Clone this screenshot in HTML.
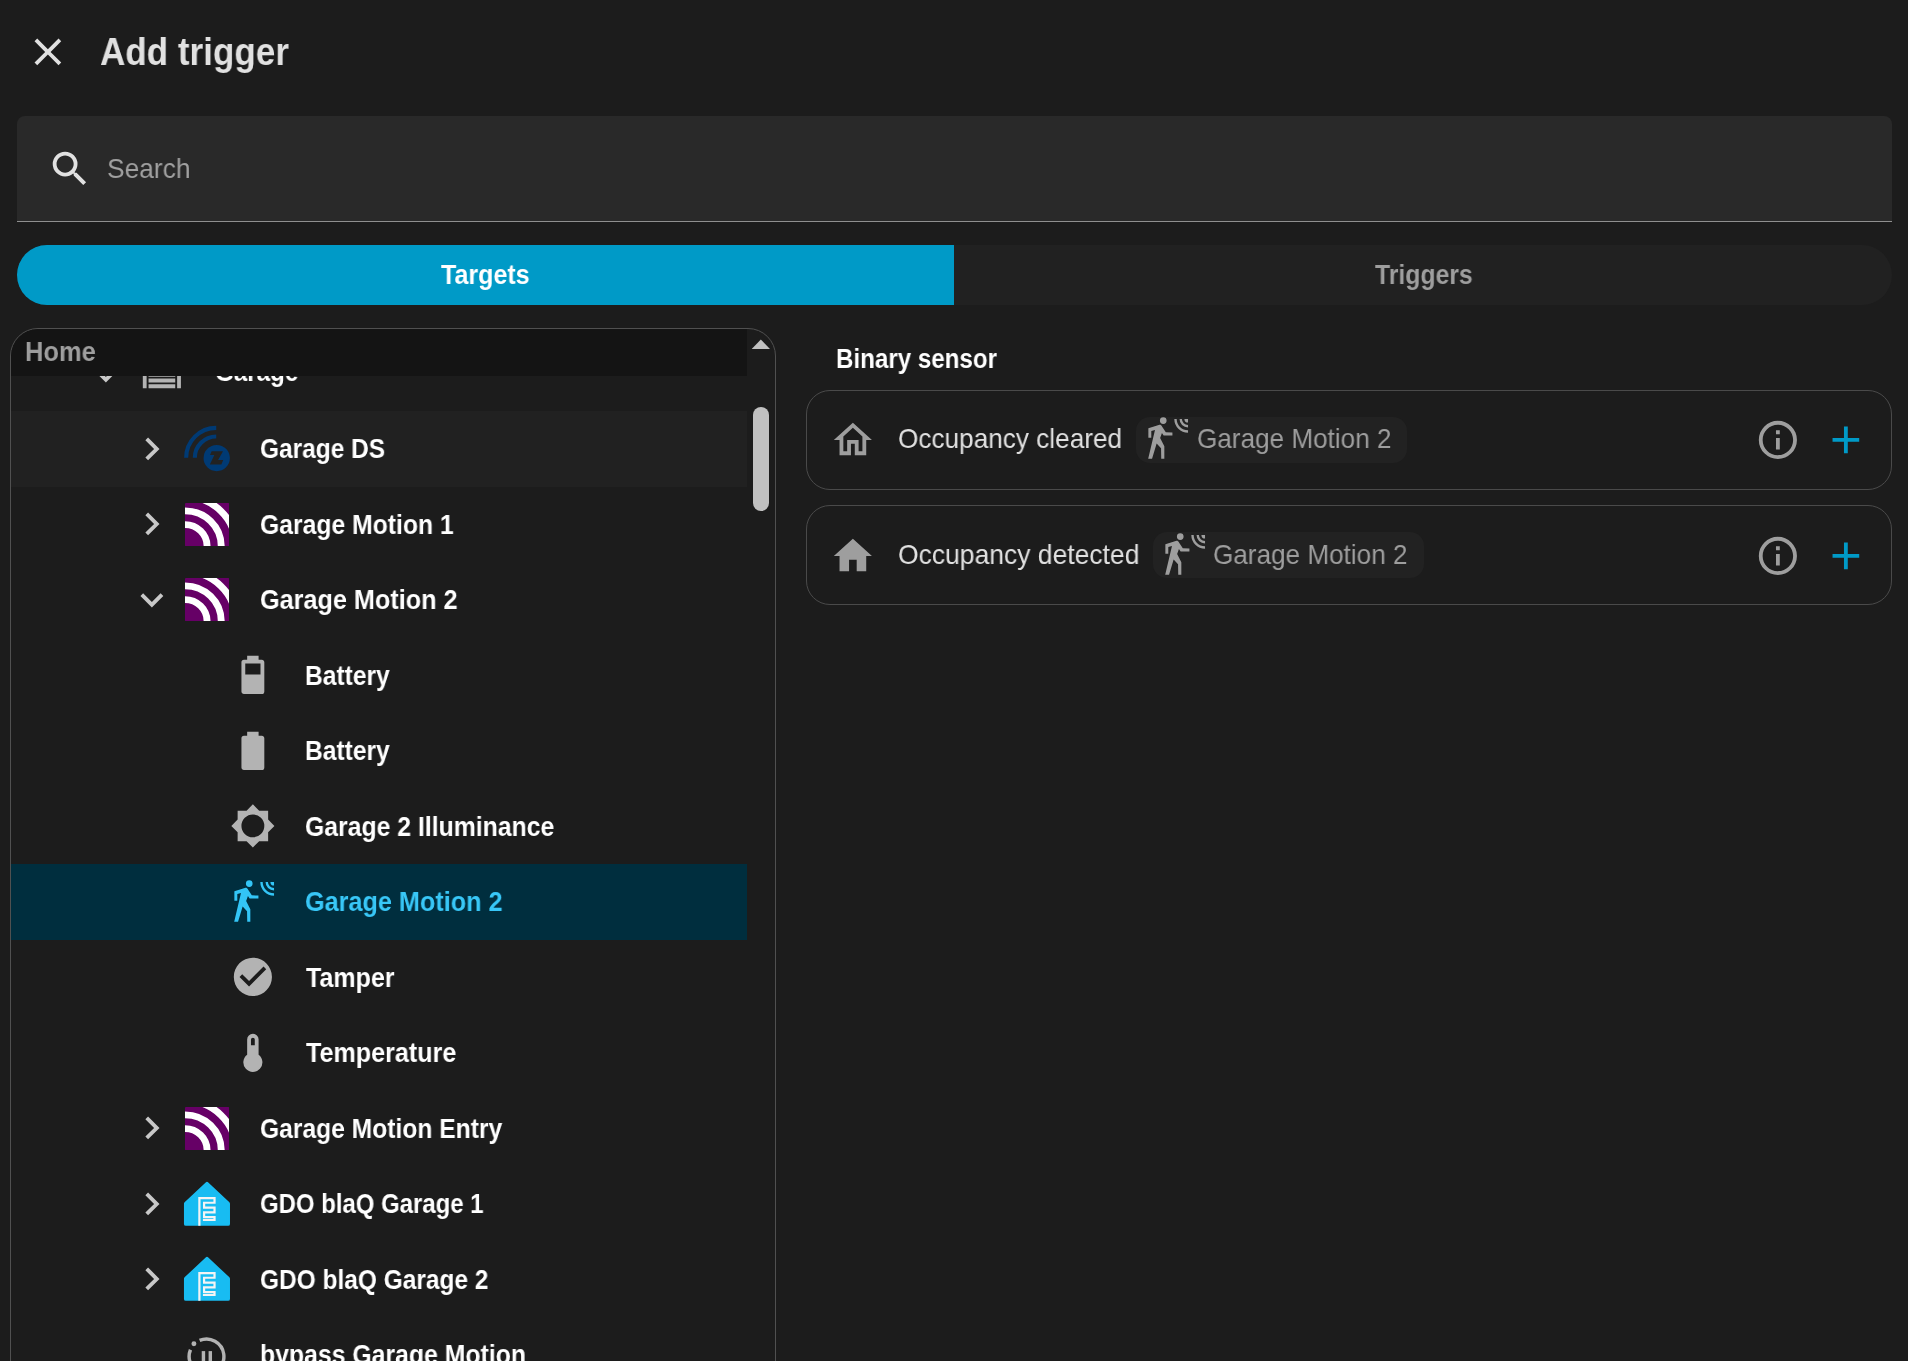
<!DOCTYPE html>
<html><head><meta charset="utf-8"><title>Add trigger</title>
<style>
html,body{margin:0;padding:0;width:1908px;height:1361px;overflow:hidden;background:#1c1c1c;font-family:"Liberation Sans",sans-serif}
.box,.ic,.t{position:absolute}
.t{white-space:nowrap;transform-origin:0 0;will-change:transform}
#tree{position:absolute;left:0;top:0;width:1908px;height:1361px;overflow:hidden;clip-path:inset(329px 1161px 0 11px round 27px 0 0 0)}
</style></head><body>
<svg class="ic" style="left:24.83px;top:28.73px;width:45.75px;height:45.75px" viewBox="0 0 24 24"><path fill="#e1e1e1" fill-rule="nonzero" d="M19,6.41L17.59,5L12,10.59L6.41,5L5,6.41L10.59,12L5,17.59L6.41,19L12,13.41L17.59,19L19,17.59L13.41,12L19,6.41Z"/></svg><div class="box" style="left:17px;top:116px;width:1875px;height:105px;background:#292929;border-radius:8px 8px 0 0"></div><div class="box" style="left:17px;top:221px;width:1875px;height:1.1px;background:#8f8f8f"></div><svg class="ic" style="left:46.72px;top:145.93px;width:45.75px;height:45.75px" viewBox="0 0 24 24"><path fill="#e1e1e1" fill-rule="nonzero" d="M9.5,3A6.5,6.5 0 0,1 16,9.5C16,11.11 15.41,12.59 14.44,13.73L14.71,14H15.5L20.5,19L19,20.5L14,15.5V14.71L13.73,14.44C12.59,15.41 11.11,16 9.5,16A6.5,6.5 0 0,1 3,9.5A6.5,6.5 0 0,1 9.5,3M9.5,5C7,5 5,7 5,9.5C5,12 7,14 9.5,14C12,14 14,12 14,9.5C14,7 12,5 9.5,5Z"/></svg><div class="box" style="left:17px;top:245px;width:1875px;height:60px;background:#212121;border-radius:30px"></div><div class="box" style="left:17px;top:245px;width:937px;height:60px;background:#009ac7;border-radius:30px 0 0 30px"></div><div class="box" style="left:10px;top:328px;width:766px;height:1100px;border:1px solid #505050;border-radius:28px;box-sizing:border-box"></div>
<div id="tree">
<svg class="ic" style="left:82.97px;top:351.77px;width:45.75px;height:45.75px" viewBox="0 0 24 24"><path fill="#c8c8c8" fill-rule="nonzero" d="M7.41,8.58L12,13.17L16.59,8.58L18,10L12,16L6,10L7.41,8.58Z"/></svg><svg class="ic" style="left:138.93px;top:350.38px;width:45.75px;height:45.75px" viewBox="0 0 24 24"><path fill="#b3b3b3" fill-rule="evenodd" d="M22,9V20H20V11H4V20H2V9L12,5L22,9M19,12H5V14H19V12M19,18H5V20H19V18M19,15H5V17H19V15Z"/></svg><div class="box" style="left:11px;top:411.0px;width:736px;height:75.5px;background:#212121"></div><svg class="ic" style="left:128.62px;top:425.88px;width:45.75px;height:45.75px" viewBox="0 0 24 24"><path fill="#c8c8c8" fill-rule="nonzero" d="M8.59,16.58L13.17,12L8.59,7.41L10,6L16,12L10,18L8.59,16.58Z"/></svg><svg class="ic" style="left:180px;top:420.25px;width:56px;height:56px" viewBox="0 0 1361 1361"><g fill="none" stroke="#003a74" stroke-width="100"><path d="M150,920A730,730 0 0,1 880,190"/><path d="M360,920A520,520 0 0,1 880,400"/></g><circle cx="892" cy="925" r="320" fill="#003a74"/><path fill="#222222" d="M770,760L1045,760L925,975L1050,975L1005,1080L725,1080L835,850L730,850Z"/></svg><svg class="ic" style="left:128.62px;top:501.38px;width:45.75px;height:45.75px" viewBox="0 0 24 24"><path fill="#c8c8c8" fill-rule="nonzero" d="M8.59,16.58L13.17,12L8.59,7.41L10,6L16,12L10,18L8.59,16.58Z"/></svg><svg class="ic" style="left:184.80px;top:502.65px;width:44.2px;height:43.2px" viewBox="0 0 100 100" preserveAspectRatio="none"><defs><clipPath id="pc2"><rect x="0" y="0" width="100" height="100" rx="2"/></clipPath></defs><g clip-path="url(#pc2)"><rect width="100" height="100" fill="#660066"/><g fill="none" stroke="#ffffff" stroke-width="15.6"><circle cx="0" cy="100" r="50"/><circle cx="0" cy="100" r="82"/><circle cx="0" cy="100" r="115"/></g></g></svg><svg class="ic" style="left:128.62px;top:576.88px;width:45.75px;height:45.75px" viewBox="0 0 24 24"><path fill="#c8c8c8" fill-rule="nonzero" d="M7.41,8.58L12,13.17L16.59,8.58L18,10L12,16L6,10L7.41,8.58Z"/></svg><svg class="ic" style="left:184.80px;top:578.15px;width:44.2px;height:43.2px" viewBox="0 0 100 100" preserveAspectRatio="none"><defs><clipPath id="pc3"><rect x="0" y="0" width="100" height="100" rx="2"/></clipPath></defs><g clip-path="url(#pc3)"><rect width="100" height="100" fill="#660066"/><g fill="none" stroke="#ffffff" stroke-width="15.6"><circle cx="0" cy="100" r="50"/><circle cx="0" cy="100" r="82"/><circle cx="0" cy="100" r="115"/></g></g></svg><svg class="ic" style="left:229.72px;top:652.38px;width:45.75px;height:45.75px" viewBox="0 0 24 24"><path fill="#b3b3b3" fill-rule="evenodd" d="M16.67,4H15V2H9V4H7.33A1.33,1.33 0 0,0 6,5.33V20.67C6,21.4 6.6,22 7.33,22H16.67A1.33,1.33 0 0,0 18,20.67V5.33C18,4.6 17.4,4 16.67,4ZM16,6H8V11.8H16Z"/></svg><svg class="ic" style="left:229.72px;top:727.88px;width:45.75px;height:45.75px" viewBox="0 0 24 24"><path fill="#b3b3b3" fill-rule="evenodd" d="M16.67,4H15V2H9V4H7.33A1.33,1.33 0 0,0 6,5.33V20.67C6,21.4 6.6,22 7.33,22H16.67A1.33,1.33 0 0,0 18,20.67V5.33C18,4.6 17.4,4 16.67,4Z"/></svg><svg class="ic" style="left:229.72px;top:803.38px;width:45.75px;height:45.75px" viewBox="0 0 24 24"><path fill="#b3b3b3" fill-rule="evenodd" d="M20,8.69V4H15.31L12,0.69L8.69,4H4V8.69L0.69,12L4,15.31V20H8.69L12,23.31L15.31,20H20V15.31L23.31,12L20,8.69ZM12,6A6,6 0 0,0 6,12A6,6 0 0,0 12,18A6,6 0 0,0 18,12A6,6 0 0,0 12,6Z"/></svg><div class="box" style="left:11px;top:864.0px;width:736px;height:75.5px;background:#002e3e"></div><svg class="ic" style="left:229.72px;top:878.88px;width:45.75px;height:45.75px" viewBox="0 0 24 24"><path fill="#33c5f6" fill-rule="nonzero" d="M8.17,4.64L2.29,6.47V11.39H3.83V7.92L5.76,7.34L2.2,22.37H4.22L6.63,14.47L8.94,16.97L9.04,22.37H10.67V15.82L8.46,11.58L9.42,8.98L10.29,10.23H14.91V8.69L11.45,8.59L9.52,5.61C9.1,4.9 8.6,4.55 8.17,4.64ZM10.1,0.65A1.75,1.75 0 1,0 10.1,4.15A1.75,1.75 0 1,0 10.1,0.65Z"/><path fill="#33c5f6" d="M18.65,1.56A4.45,4.45 0 0,0 23.10,6.01L23.10,4.76A3.2,3.2 0 0,1 19.90,1.56ZM15.90,1.56A7.2,7.2 0 0,0 23.10,8.76L23.10,7.51A5.95,5.95 0 0,1 17.15,1.56ZM21.20,1.56A1.9,1.9 0 0,0 23.10,3.46L23.10,1.56Z"/></svg><svg class="ic" style="left:229.72px;top:954.38px;width:45.75px;height:45.75px" viewBox="0 0 24 24"><path fill="#b3b3b3" fill-rule="evenodd" d="M12 2C6.5 2 2 6.5 2 12S6.5 22 12 22 22 17.5 22 12 17.5 2 12 2M10 17L5 12L6.41 10.59L10 14.17L17.59 6.58L19 8L10 17Z"/></svg><svg class="ic" style="left:229.72px;top:1029.88px;width:45.75px;height:45.75px" viewBox="0 0 24 24"><path fill="#b3b3b3" fill-rule="evenodd" d="M15 13V5A3 3 0 0 0 9 5V13A5 5 0 1 0 15 13M12 4A1 1 0 0 1 13 5V8H11V5A1 1 0 0 1 12 4Z"/></svg><svg class="ic" style="left:128.62px;top:1105.38px;width:45.75px;height:45.75px" viewBox="0 0 24 24"><path fill="#c8c8c8" fill-rule="nonzero" d="M8.59,16.58L13.17,12L8.59,7.41L10,6L16,12L10,18L8.59,16.58Z"/></svg><svg class="ic" style="left:184.80px;top:1106.65px;width:44.2px;height:43.2px" viewBox="0 0 100 100" preserveAspectRatio="none"><defs><clipPath id="pc10"><rect x="0" y="0" width="100" height="100" rx="2"/></clipPath></defs><g clip-path="url(#pc10)"><rect width="100" height="100" fill="#660066"/><g fill="none" stroke="#ffffff" stroke-width="15.6"><circle cx="0" cy="100" r="50"/><circle cx="0" cy="100" r="82"/><circle cx="0" cy="100" r="115"/></g></g></svg><svg class="ic" style="left:128.62px;top:1180.88px;width:45.75px;height:45.75px" viewBox="0 0 24 24"><path fill="#c8c8c8" fill-rule="nonzero" d="M8.59,16.58L13.17,12L8.59,7.41L10,6L16,12L10,18L8.59,16.58Z"/></svg><svg class="ic" style="left:178px;top:1175.85px;width:58px;height:58px" viewBox="0 0 1361 1361"><path fill="#18bcf2" stroke="#18bcf2" stroke-width="90" stroke-linejoin="round" d="M680,185L185,650V1125H1175V650Z"/><path fill="none" stroke="#f4f4f4" stroke-width="52" d="M502,1170V520H857V628H612V742H857V852H612V962H857V1030H585"/></svg><svg class="ic" style="left:128.62px;top:1256.38px;width:45.75px;height:45.75px" viewBox="0 0 24 24"><path fill="#c8c8c8" fill-rule="nonzero" d="M8.59,16.58L13.17,12L8.59,7.41L10,6L16,12L10,18L8.59,16.58Z"/></svg><svg class="ic" style="left:178px;top:1251.35px;width:58px;height:58px" viewBox="0 0 1361 1361"><path fill="#18bcf2" stroke="#18bcf2" stroke-width="90" stroke-linejoin="round" d="M680,185L185,650V1125H1175V650Z"/><path fill="none" stroke="#f4f4f4" stroke-width="52" d="M502,1170V520H857V628H612V742H857V852H612V962H857V1030H585"/></svg><svg class="ic" style="left:184.10px;top:1332.75px;width:45.75px;height:45.75px" viewBox="0 0 24 24"><path fill="none" stroke="#b3b3b3" stroke-width="1.8" d="M8.2,3.9A9.1,9.1 0 1,1 3.4,8.8"/><circle cx="5.2" cy="5.6" r="1.3" fill="#b3b3b3"/><rect x="9.3" y="9.5" width="1.8" height="9" fill="#b3b3b3"/><rect x="12.9" y="9.5" width="1.8" height="9" fill="#b3b3b3"/></svg>
<div class="t" style="left:214.80px;top:359.34px;font-size:27px;line-height:27px;font-weight:bold;color:#ffffff;transform:scaleX(0.8953)">Garage</div><div class="t" style="left:259.59px;top:436.04px;font-size:27px;line-height:27px;font-weight:bold;color:#ffffff;transform:scaleX(0.9063)">Garage DS</div><div class="t" style="left:259.58px;top:511.54px;font-size:27px;line-height:27px;font-weight:bold;color:#ffffff;transform:scaleX(0.9159)">Garage Motion 1</div><div class="t" style="left:259.57px;top:587.04px;font-size:27px;line-height:27px;font-weight:bold;color:#ffffff;transform:scaleX(0.9341)">Garage Motion 2</div><div class="t" style="left:305.09px;top:662.54px;font-size:27px;line-height:27px;font-weight:bold;color:#ffffff;transform:scaleX(0.9107)">Battery</div><div class="t" style="left:305.09px;top:738.04px;font-size:27px;line-height:27px;font-weight:bold;color:#ffffff;transform:scaleX(0.9107)">Battery</div><div class="t" style="left:305.08px;top:813.54px;font-size:27px;line-height:27px;font-weight:bold;color:#ffffff;transform:scaleX(0.918)">Garage 2 Illuminance</div><div class="t" style="left:305.07px;top:889.04px;font-size:27px;line-height:27px;font-weight:bold;color:#38c7f7;transform:scaleX(0.9341)">Garage Motion 2</div><div class="t" style="left:306.00px;top:964.54px;font-size:27px;line-height:27px;font-weight:bold;color:#ffffff;transform:scaleX(0.9269)">Tamper</div><div class="t" style="left:306.00px;top:1040.04px;font-size:27px;line-height:27px;font-weight:bold;color:#ffffff;transform:scaleX(0.9304)">Temperature</div><div class="t" style="left:259.59px;top:1115.54px;font-size:27px;line-height:27px;font-weight:bold;color:#ffffff;transform:scaleX(0.9122)">Garage Motion Entry</div><div class="t" style="left:259.61px;top:1191.04px;font-size:27px;line-height:27px;font-weight:bold;color:#ffffff;transform:scaleX(0.887)">GDO blaQ Garage 1</div><div class="t" style="left:259.59px;top:1266.54px;font-size:27px;line-height:27px;font-weight:bold;color:#ffffff;transform:scaleX(0.9062)">GDO blaQ Garage 2</div><div class="t" style="left:259.58px;top:1342.04px;font-size:27px;line-height:27px;font-weight:bold;color:#ffffff;transform:scaleX(0.9189)">bypass Garage Motion</div>
<div class="box" style="left:11px;top:329px;width:736px;height:46.5px;background:#141414;border-top-left-radius:27px"></div>
</div>
<div class="box" style="left:752.8px;top:406.6px;width:16px;height:104.3px;background:#c1c1c1;border-radius:8px"></div><svg class="ic" style="left:750px;top:338px;width:22px;height:13px" viewBox="0 0 22 13"><path fill="#c1c1c1" d="M1.7,11L20,11L10.85,1.4Z"/></svg>
<div class="box" style="left:806px;top:390px;width:1086px;height:100px;border:1px solid #4a4a4a;border-radius:24px;box-sizing:border-box"></div><svg class="ic" style="left:829.83px;top:416.93px;width:45.75px;height:45.75px" viewBox="0 0 24 24"><path fill="#9e9e9e" fill-rule="nonzero" d="M12 5.69L17 10.19V18H15V12H9V18H7V10.19L12 5.69M12 3L2 12H5V20H11V14H13V20H19V12H22Z"/></svg><div class="box" style="left:1136px;top:417px;width:271px;height:45.5px;background:#222222;border-radius:14px"></div><svg class="ic" style="left:1143.83px;top:416.12px;width:45.75px;height:45.75px" viewBox="0 0 24 24"><path fill="#9e9e9e" fill-rule="nonzero" d="M8.17,4.64L2.29,6.47V11.39H3.83V7.92L5.76,7.34L2.2,22.37H4.22L6.63,14.47L8.94,16.97L9.04,22.37H10.67V15.82L8.46,11.58L9.42,8.98L10.29,10.23H14.91V8.69L11.45,8.59L9.52,5.61C9.1,4.9 8.6,4.55 8.17,4.64ZM10.1,0.65A1.75,1.75 0 1,0 10.1,4.15A1.75,1.75 0 1,0 10.1,0.65Z"/><path fill="#9e9e9e" d="M18.65,1.56A4.45,4.45 0 0,0 23.10,6.01L23.10,4.76A3.2,3.2 0 0,1 19.90,1.56ZM15.90,1.56A7.2,7.2 0 0,0 23.10,8.76L23.10,7.51A5.95,5.95 0 0,1 17.15,1.56ZM21.20,1.56A1.9,1.9 0 0,0 23.10,3.46L23.10,1.56Z"/></svg><svg class="ic" style="left:1754.72px;top:416.93px;width:45.75px;height:45.75px" viewBox="0 0 24 24"><path fill="#9e9e9e" fill-rule="nonzero" d="M11,9H13V7H11M12,20C7.59,20 4,16.41 4,12C4,7.59 7.59,4 12,4C16.41,4 20,7.59 20,12C20,16.41 16.41,20 12,20M12,2A10,10 0 0,0 2,12A10,10 0 0,0 12,22A10,10 0 0,0 22,12A10,10 0 0,0 12,2M11,17H13V11H11V17Z"/></svg><svg class="ic" style="left:1822.72px;top:416.93px;width:45.75px;height:45.75px" viewBox="0 0 24 24"><path fill="#009ac7" fill-rule="nonzero" d="M19,13H13V19H11V13H5V11H11V5H13V11H19V13Z"/></svg><div class="box" style="left:806px;top:505px;width:1086px;height:100px;border:1px solid #4a4a4a;border-radius:24px;box-sizing:border-box"></div><svg class="ic" style="left:829.83px;top:532.62px;width:45.75px;height:45.75px" viewBox="0 0 24 24"><path fill="#9e9e9e" fill-rule="nonzero" d="M10,20V14H14V20H19V12H22L12,3L2,12H5V20H10Z"/></svg><div class="box" style="left:1153px;top:532px;width:271px;height:45.5px;background:#222222;border-radius:14px"></div><svg class="ic" style="left:1160.53px;top:531.83px;width:45.75px;height:45.75px" viewBox="0 0 24 24"><path fill="#9e9e9e" fill-rule="nonzero" d="M8.17,4.64L2.29,6.47V11.39H3.83V7.92L5.76,7.34L2.2,22.37H4.22L6.63,14.47L8.94,16.97L9.04,22.37H10.67V15.82L8.46,11.58L9.42,8.98L10.29,10.23H14.91V8.69L11.45,8.59L9.52,5.61C9.1,4.9 8.6,4.55 8.17,4.64ZM10.1,0.65A1.75,1.75 0 1,0 10.1,4.15A1.75,1.75 0 1,0 10.1,0.65Z"/><path fill="#9e9e9e" d="M18.65,1.56A4.45,4.45 0 0,0 23.10,6.01L23.10,4.76A3.2,3.2 0 0,1 19.90,1.56ZM15.90,1.56A7.2,7.2 0 0,0 23.10,8.76L23.10,7.51A5.95,5.95 0 0,1 17.15,1.56ZM21.20,1.56A1.9,1.9 0 0,0 23.10,3.46L23.10,1.56Z"/></svg><svg class="ic" style="left:1754.72px;top:532.62px;width:45.75px;height:45.75px" viewBox="0 0 24 24"><path fill="#9e9e9e" fill-rule="nonzero" d="M11,9H13V7H11M12,20C7.59,20 4,16.41 4,12C4,7.59 7.59,4 12,4C16.41,4 20,7.59 20,12C20,16.41 16.41,20 12,20M12,2A10,10 0 0,0 2,12A10,10 0 0,0 12,22A10,10 0 0,0 22,12A10,10 0 0,0 12,2M11,17H13V11H11V17Z"/></svg><svg class="ic" style="left:1822.72px;top:532.62px;width:45.75px;height:45.75px" viewBox="0 0 24 24"><path fill="#009ac7" fill-rule="nonzero" d="M19,13H13V19H11V13H5V11H11V5H13V11H19V13Z"/></svg>
<div class="t" style="left:100.40px;top:33.11px;font-size:38.5px;line-height:38.5px;font-weight:bold;color:#e1e1e1;transform:scaleX(0.9109)">Add trigger</div><div class="t" style="left:107.36px;top:154.75px;font-size:28px;line-height:28px;font-weight:normal;color:#a0a0a0;transform:scaleX(0.9403)">Search</div><div class="t" style="left:441.00px;top:262.04px;font-size:27px;line-height:27px;font-weight:bold;color:#ffffff;transform:scaleX(0.9279)">Targets</div><div class="t" style="left:1375.30px;top:262.04px;font-size:27px;line-height:27px;font-weight:bold;color:#9e9e9e;transform:scaleX(0.9174)">Triggers</div><div class="t" style="left:25.46px;top:339.24px;font-size:27px;line-height:27px;font-weight:bold;color:#9e9e9e;transform:scaleX(0.9433)">Home</div><div class="t" style="left:836.41px;top:346.14px;font-size:27px;line-height:27px;font-weight:bold;color:#ffffff;transform:scaleX(0.8944)">Binary sensor</div><div class="t" style="left:897.57px;top:424.85px;font-size:28px;line-height:28px;font-weight:normal;color:#e1e1e1;transform:scaleX(0.935)">Occupancy cleared</div><div class="t" style="left:1196.87px;top:424.85px;font-size:28px;line-height:28px;font-weight:normal;color:#9e9e9e;transform:scaleX(0.9324)">Garage Motion 2</div><div class="t" style="left:897.55px;top:540.55px;font-size:28px;line-height:28px;font-weight:normal;color:#e1e1e1;transform:scaleX(0.9458)">Occupancy detected</div><div class="t" style="left:1213.27px;top:540.55px;font-size:28px;line-height:28px;font-weight:normal;color:#9e9e9e;transform:scaleX(0.9324)">Garage Motion 2</div>
</body></html>
